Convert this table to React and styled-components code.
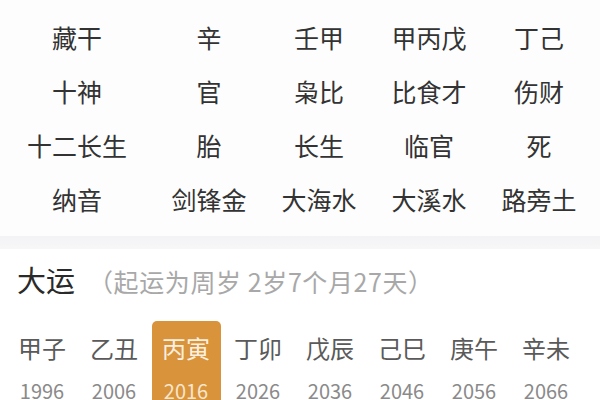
import React from 'react';
import styled, { createGlobalStyle } from 'styled-components';

const GlobalStyle = createGlobalStyle`
  html, body {
    margin: 0;
    padding: 0;
    background: #fff;
  }
  body {
    font-family: "Noto Sans CJK SC", "Noto Sans", sans-serif;
    overflow: hidden;
  }
`;

const Page = styled.div`
  width: 600px;
  height: 400px;
  overflow: hidden;
  background: #fff;
`;

const PillarTable = styled.div`
  display: grid;
  grid-template-columns: 154px repeat(4, 110px);
  grid-auto-rows: 54px;
  padding: 10px 0;
  background: #fdfdfd;
`;

const Cell = styled.div`
  display: flex;
  align-items: center;
  justify-content: center;
  font-size: 25px;
  color: #333;
  white-space: nowrap;
`;

const Divider = styled.div`
  height: 13px;
  background: linear-gradient(#f3f3f5, #f7f7f8);
`;

const Section = styled.div`
  background: #fff;
`;

const Header = styled.div`
  display: flex;
  align-items: baseline;
  padding: 10px 0 0 17px;
  height: 40px;
`;

const Title = styled.span`
  font-size: 29px;
  color: #2a2a2a;
  line-height: 40px;
`;

const Note = styled.span`
  margin-left: 13px;
  font-size: 25px;
  letter-spacing: 0.6px;
  color: #a8a8a8;
  line-height: 40px;
  white-space: nowrap;
`;

const LuckRow = styled.div`
  display: grid;
  grid-template-columns: repeat(8, 72px);
  padding: 22px 0 0 6px;
`;

const LuckCell = styled.div`
  justify-self: center;
  width: 69px;
  height: 90px;
  border-radius: 5px;
  display: flex;
  flex-direction: column;
  align-items: center;
  padding-top: 11px;
  box-sizing: border-box;
  background: ${(p) => (p.$active ? '#d9933b' : 'transparent')};
`;

const Pillar = styled.div`
  font-size: 24px;
  line-height: 32px;
  color: ${(p) => (p.$active ? '#fbf0e0' : '#5a5a5a')};
  white-space: nowrap;
`;

const Year = styled.div`
  margin-top: 15px;
  font-size: 20px;
  line-height: 24px;
  color: ${(p) => (p.$active ? '#f7e6cc' : '#8a8a8a')};
`;

const rows = [
  ['藏干', '辛', '壬甲', '甲丙戊', '丁己'],
  ['十神', '官', '枭比', '比食才', '伤财'],
  ['十二长生', '胎', '长生', '临官', '死'],
  ['纳音', '剑锋金', '大海水', '大溪水', '路旁土'],
];

const luck = [
  ['甲子', 1996],
  ['乙丑', 2006],
  ['丙寅', 2016],
  ['丁卯', 2026],
  ['戊辰', 2036],
  ['己巳', 2046],
  ['庚午', 2056],
  ['辛未', 2066],
];

const App = () => {
  return (
    <Page>
      <GlobalStyle />
      <PillarTable>
        {rows.map((row) =>
          row.map((text, i) => <Cell key={row[0] + i}>{text}</Cell>)
        )}
      </PillarTable>
      <Divider />
      <Section>
        <Header>
          <Title>大运</Title>
          <Note>（起运为周岁 2岁7个月27天）</Note>
        </Header>
        <LuckRow>
          {luck.map(([gz, year]) => {
            const active = year === 2016;
            return (
              <LuckCell key={gz} $active={active}>
                <Pillar $active={active}>{gz}</Pillar>
                <Year $active={active}>{year}</Year>
              </LuckCell>
            );
          })}
        </LuckRow>
      </Section>
    </Page>
  );
};

export default App;
